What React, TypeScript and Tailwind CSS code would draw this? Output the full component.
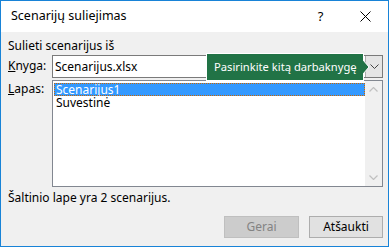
import React from "react";

const font = { fontFamily: '"Noto Sans", "Open Sans", sans-serif' };

export default function App() {
  return (
    <div className="w-[389px] h-[247px] bg-[#f0f0f0] border border-[#1883d7] flex flex-col relative text-[12px] text-black" style={font}>
      {/* title bar */}
      <div className="h-[31px] bg-white flex items-center pl-[10px] shrink-0">
        <div className="text-[12.5px] flex-1">Scenarijų suliejimas</div>
        <div className="w-[46px] text-center text-[13px] pl-[3px]">?</div>
        <div className="w-[46px] flex justify-center">
          <svg width="11" height="11" viewBox="0 0 11 11">
            <path d="M0.5 0.5 L10.5 10.5 M10.5 0.5 L0.5 10.5" stroke="#000" strokeWidth="1" />
          </svg>
        </div>
      </div>
      <div className="flex flex-col px-[7px] pr-[5px]">
        <div className="mt-[6px] h-[16px] leading-[16px]">Sulieti scenarijus iš</div>
        <div className="mt-[1px] flex items-center">
          <div className="w-[44px] leading-[16px] -mt-[2px]"><span className="underline">K</span>nyga:</div>
          <div className="flex-1 h-[23px] bg-white border border-[#7a7a7a] flex items-center">
            <div className="flex-1 pl-[2px] leading-[16px]">Scenarijus.xlsx</div>
            <div className="w-[17px] h-full bg-[#e5e5e5] border-l border-[#adadad] flex items-center justify-center">
              <svg width="9" height="5" viewBox="0 0 9 5">
                <path d="M0.5 0.5 L4.5 4.5 L8.5 0.5" stroke="#444" strokeWidth="1" fill="none" />
              </svg>
            </div>
          </div>
        </div>
        <div className="mt-[2px] flex items-start">
          <div className="w-[44px] leading-[16px] pt-[1px]"><span className="underline">L</span>apas:</div>
          <div className="flex-1 h-[107px] bg-white border border-[#828790] flex">
            <div className="flex-1 pt-[2px] pl-[1px]">
              <div className="h-[13px] leading-[13px] bg-[#3399ff] text-white pl-[2px] outline outline-1 outline-dotted outline-[#cc6600] -outline-offset-1">Scenarijus1</div>
              <div className="h-[13px] leading-[13px] pl-[2px]">Suvestinė</div>
            </div>
            <div className="w-[17px] bg-[#f0f0f0] flex flex-col items-center justify-between py-[6px]">
              <svg width="9" height="5" viewBox="0 0 9 5">
                <path d="M0.5 4.5 L4.5 0.5 L8.5 4.5" stroke="#c0c0c0" strokeWidth="1.2" fill="none" />
              </svg>
              <svg width="9" height="5" viewBox="0 0 9 5">
                <path d="M0.5 0.5 L4.5 4.5 L8.5 0.5" stroke="#c0c0c0" strokeWidth="1.2" fill="none" />
              </svg>
            </div>
          </div>
        </div>
        <div className="mt-[3px] h-[16px] leading-[16px]">Šaltinio lape yra 2 scenarijus.</div>
        <div className="mt-[10px] flex justify-end gap-[10px]">
          <div className="w-[75px] h-[22px] bg-[#cccccc] border border-[#bfbfbf] text-[#838383] flex items-center justify-center">Gerai</div>
          <div className="w-[74px] h-[22px] bg-[#e1e1e1] border border-[#adadad] flex items-center justify-center">Atšaukti</div>
        </div>
      </div>
      {/* tooltip */}
      <div className="absolute left-[205px] top-[52px] flex items-center">
        <div className="h-[28px] w-[158px] bg-[#217346] border border-white text-white text-[11.2px] whitespace-nowrap flex items-center pl-[7px]">Pasirinkite kitą darbaknygę</div>
        <svg width="7" height="14" viewBox="0 0 7 14" className="-ml-[1px]">
          <path d="M0 0 L6 7 L0 14 Z" fill="#217346" />
          <path d="M0 0 L6 7 L0 14" stroke="#fff" strokeWidth="1" fill="none" />
        </svg>
      </div>
    </div>
  );
}
